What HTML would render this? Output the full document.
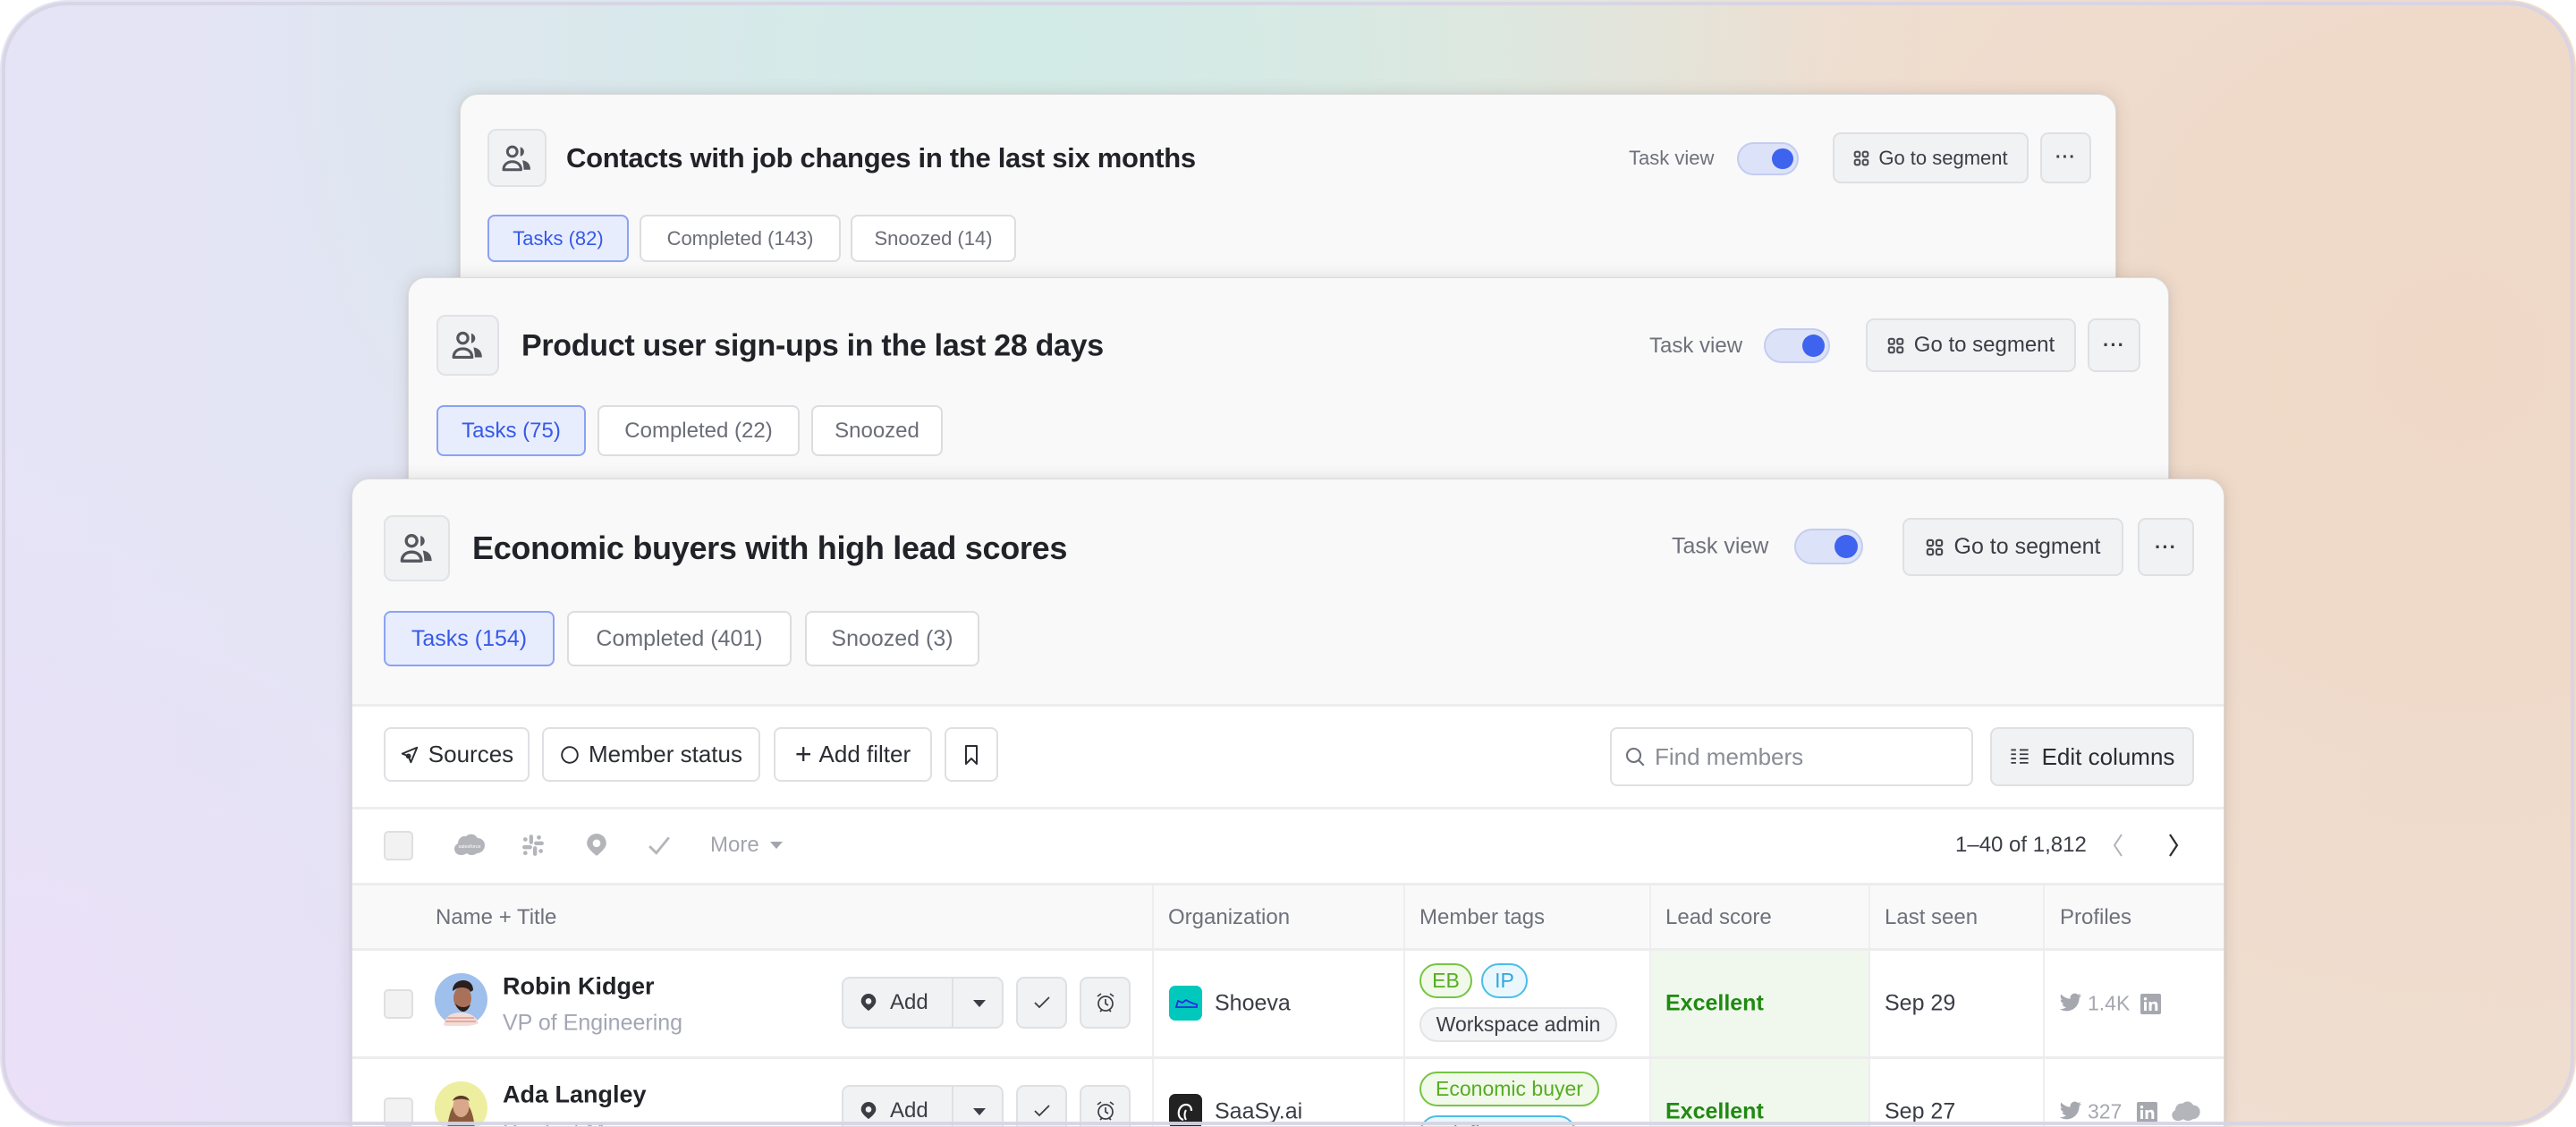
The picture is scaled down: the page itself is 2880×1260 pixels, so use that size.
<!DOCTYPE html>
<html><head><meta charset="utf-8">
<style>
*{box-sizing:border-box;margin:0;padding:0}
html,body{width:2880px;height:1260px;background:#fff;overflow:hidden;font-family:"Liberation Sans",Arial,sans-serif;color:#2b2d33}
.frame{position:absolute;left:0;top:0;width:2880px;height:1260px;border-radius:76px;overflow:hidden;
background:
radial-gradient(ellipse 900px 700px at 1150px 60px,#d2ebe6 0%,rgba(210,235,230,0) 100%),
radial-gradient(ellipse 1100px 1100px at 2750px 400px,#efd8c6 0%,rgba(239,216,198,0) 100%),
radial-gradient(ellipse 900px 800px at 0px 1260px,#ebe0f8 0%,rgba(235,224,248,0) 100%),
linear-gradient(90deg,#e5e4f6 0%,#dfe6f0 30%,#e3e6dc 55%,#efe0d4 75%,#efdfd3 100%)}
.frameb{position:absolute;left:2px;top:2px;width:2876px;height:1256px;border-radius:74px;border:4px solid rgba(215,212,228,.95);pointer-events:none}
.card{position:absolute;background:#f9f9f9;border:1.5px solid #dcdcdc;border-radius:20px;box-shadow:0 0 18px rgba(90,70,60,.16),0 2px 6px rgba(0,0,0,.06);overflow:hidden}
.a{position:absolute}
.ib{position:absolute;background:#f1f2f4;border:2px solid #e1e2e5;border-radius:10px;display:flex;align-items:center;justify-content:center}
.title{position:absolute;font-weight:700;color:#222328;white-space:nowrap;transform:translateY(-50%);letter-spacing:-.3px}
.tab{position:absolute;border:2px solid #dcdde0;border-radius:8px;background:#fff;color:#6b6e78;display:flex;align-items:center;justify-content:center;white-space:nowrap}
.tab.on{background:#e8edfd;border-color:#8aa2f5;color:#3659e8}
.tv{position:absolute;color:#6e717b;transform:translateY(-50%);white-space:nowrap}
.tog{position:absolute;background:#dce2f8;border:2px solid #c4cdf0;border-radius:30px}
.tog i{position:absolute;right:6%;top:14%;height:72%;aspect-ratio:1;border-radius:50%;background:#3e63ee}
.btn{position:absolute;background:#f1f2f4;border:2px solid #dfe0e3;border-radius:9px;display:flex;align-items:center;justify-content:center;color:#3b3d45;white-space:nowrap}
.wb{position:absolute;background:#fff;border:2px solid #dfe0e3;border-radius:8px;display:flex;align-items:center;justify-content:center;color:#2b2d33;white-space:nowrap;font-size:26px}
.hl{position:absolute;left:0;right:0;height:3px;background:#ededee}
.cb{position:absolute;width:33px;height:33px;background:#f2f2f3;border:2px solid #dedfe1;border-radius:5px}
.th{position:absolute;color:#6e717b;font-size:24px;transform:translateY(-50%);white-space:nowrap}
.vl{position:absolute;width:2px;background:#eeeeef}
.txt{position:absolute;transform:translateY(-50%);white-space:nowrap}
.pill{position:absolute;border-radius:22px;display:flex;align-items:center;justify-content:center;font-size:23px;white-space:nowrap}
.g{border:2.5px solid #76c443;background:#f1f9ea;color:#55ad22}
.b{border:2.5px solid #4bbde8;background:#eaf7fd;color:#2fa8dd}
.n{border:2px solid #e3e4e7;background:#f4f5f7;color:#3b3d45}
.dots{font-weight:700;letter-spacing:1px}
</style></head><body>
<div class="frame">
<!-- Card 1 -->
<div class="card" style="left:514px;top:105px;width:1852px;height:260px">
 <div class="ib" style="left:30px;top:38px;width:66px;height:65px">
  <svg width="36" height="34" viewBox="0 0 24 22"><circle cx="8.5" cy="6" r="3.6" fill="none" stroke="#55575e" stroke-width="2"/><path d="M2 19.5c0-4 3-6 6.5-6s6.5 2 6.5 6z" fill="none" stroke="#55575e" stroke-width="2" stroke-linejoin="round"/><path d="M14.5 2.6a3.6 3.6 0 0 1 0 7z" fill="#55575e"/><path d="M16 12.5c3.5.4 6 2.6 6 7h-5c0-3-.5-5-1-7z" fill="#55575e"/></svg>
 </div>
 <div class="title" style="left:118px;top:71px;font-size:31px">Contacts with job changes in the last six months</div>
 <div class="tab on" style="left:30px;top:134px;width:158px;height:53px;font-size:22px">Tasks (82)</div>
 <div class="tab" style="left:200px;top:134px;width:225px;height:53px;font-size:22px">Completed (143)</div>
 <div class="tab" style="left:436px;top:134px;width:185px;height:53px;font-size:22px">Snoozed (14)</div>
 <div class="tv" style="left:1306px;top:71px;font-size:22px">Task view</div>
 <div class="tog" style="left:1427px;top:53px;width:69px;height:37px"><i></i></div>
 <div class="btn" style="left:1534px;top:42px;width:219px;height:57px;font-size:22px"><svg width="18" height="18" viewBox="0 0 16 16" style="margin-right:10px"><g fill="none" stroke="#4a4c53" stroke-width="1.8"><rect x="1.5" y="1.5" width="5" height="5" rx="1.5"/><rect x="9.5" y="1.5" width="5" height="5" rx="1.5"/><rect x="1.5" y="9.5" width="5" height="5" rx="1.5"/><rect x="9.5" y="9.5" width="5" height="5" rx="1.5"/></g></svg>Go to segment</div>
 <div class="btn dots" style="left:1766px;top:42px;width:57px;height:57px;font-size:20px">···</div>
</div>
<!-- Card 2 -->
<div class="card" style="left:456px;top:310px;width:1969px;height:260px">
 <div class="ib" style="left:31px;top:41px;width:70px;height:68px">
  <svg width="38" height="36" viewBox="0 0 24 22"><circle cx="8.5" cy="6" r="3.6" fill="none" stroke="#55575e" stroke-width="2"/><path d="M2 19.5c0-4 3-6 6.5-6s6.5 2 6.5 6z" fill="none" stroke="#55575e" stroke-width="2" stroke-linejoin="round"/><path d="M14.5 2.6a3.6 3.6 0 0 1 0 7z" fill="#55575e"/><path d="M16 12.5c3.5.4 6 2.6 6 7h-5c0-3-.5-5-1-7z" fill="#55575e"/></svg>
 </div>
 <div class="title" style="left:126px;top:76px;font-size:34px">Product user sign-ups in the last 28 days</div>
 <div class="tab on" style="left:31px;top:142px;width:167px;height:57px;font-size:24px">Tasks (75)</div>
 <div class="tab" style="left:211px;top:142px;width:226px;height:57px;font-size:24px">Completed (22)</div>
 <div class="tab" style="left:450px;top:142px;width:147px;height:57px;font-size:24px">Snoozed</div>
 <div class="tv" style="left:1387px;top:76px;font-size:24px">Task view</div>
 <div class="tog" style="left:1515px;top:56px;width:74px;height:39px"><i></i></div>
 <div class="btn" style="left:1629px;top:45px;width:235px;height:60px;font-size:24px"><svg width="19" height="19" viewBox="0 0 16 16" style="margin-right:11px"><g fill="none" stroke="#4a4c53" stroke-width="1.8"><rect x="1.5" y="1.5" width="5" height="5" rx="1.5"/><rect x="9.5" y="1.5" width="5" height="5" rx="1.5"/><rect x="1.5" y="9.5" width="5" height="5" rx="1.5"/><rect x="9.5" y="9.5" width="5" height="5" rx="1.5"/></g></svg>Go to segment</div>
 <div class="btn dots" style="left:1877px;top:45px;width:59px;height:60px;font-size:22px">···</div>
</div>
<!-- Card 3 -->
<div class="card" style="left:393px;top:535px;width:2094px;height:725px;border-bottom-left-radius:0;border-bottom-right-radius:0">
 <div class="a" style="left:0;top:252px;right:0;bottom:0;background:#fff"></div>
 <div class="ib" style="left:35px;top:40px;width:74px;height:74px">
  <svg width="40" height="38" viewBox="0 0 24 22"><circle cx="8.5" cy="6" r="3.6" fill="none" stroke="#55575e" stroke-width="2"/><path d="M2 19.5c0-4 3-6 6.5-6s6.5 2 6.5 6z" fill="none" stroke="#55575e" stroke-width="2" stroke-linejoin="round"/><path d="M14.5 2.6a3.6 3.6 0 0 1 0 7z" fill="#55575e"/><path d="M16 12.5c3.5.4 6 2.6 6 7h-5c0-3-.5-5-1-7z" fill="#55575e"/></svg>
 </div>
 <div class="title" style="left:134px;top:77px;font-size:36px">Economic buyers with high lead scores</div>
 <div class="tab on" style="left:35px;top:147px;width:191px;height:62px;font-size:25px">Tasks (154)</div>
 <div class="tab" style="left:240px;top:147px;width:251px;height:62px;font-size:25px">Completed (401)</div>
 <div class="tab" style="left:506px;top:147px;width:195px;height:62px;font-size:25px">Snoozed (3)</div>
 <div class="tv" style="left:1475px;top:75px;font-size:25px">Task view</div>
 <div class="tog" style="left:1612px;top:55px;width:77px;height:40px"><i></i></div>
 <div class="btn" style="left:1733px;top:43px;width:247px;height:65px;font-size:25px"><svg width="20" height="20" viewBox="0 0 16 16" style="margin-right:12px"><g fill="none" stroke="#4a4c53" stroke-width="1.8"><rect x="1.5" y="1.5" width="5" height="5" rx="1.5"/><rect x="9.5" y="1.5" width="5" height="5" rx="1.5"/><rect x="1.5" y="9.5" width="5" height="5" rx="1.5"/><rect x="9.5" y="9.5" width="5" height="5" rx="1.5"/></g></svg>Go to segment</div>
 <div class="btn dots" style="left:1996px;top:43px;width:63px;height:65px;font-size:22px">···</div>
 <div class="hl" style="top:251px"></div>
 <!-- toolbar -->
 <div class="wb" style="left:35px;top:277px;width:163px;height:61px"><svg width="22" height="22" viewBox="0 0 16 16" style="margin-right:10px"><g fill="none" stroke="#2b2d33" stroke-width="1.4" stroke-linejoin="round"><path d="M14 2L2 7l5 2 2 5z"/><circle cx="7" cy="9" r="1.4"/></g></svg>Sources</div>
 <div class="wb" style="left:212px;top:277px;width:244px;height:61px"><svg width="22" height="22" viewBox="0 0 16 16" style="margin-right:10px"><circle cx="8" cy="8" r="6.4" fill="none" stroke="#2b2d33" stroke-width="1.4"/></svg>Member status</div>
 <div class="wb" style="left:471px;top:277px;width:177px;height:61px"><span style="font-size:32px;margin-right:8px;font-weight:300">+</span>Add filter</div>
 <div class="wb" style="left:662px;top:277px;width:60px;height:61px"><svg width="16" height="24" viewBox="0 0 12 18"><path d="M1.5 1.5h9v15L6 12l-4.5 4.5z" fill="none" stroke="#2b2d33" stroke-width="1.5" stroke-linejoin="round"/></svg></div>
 <div class="wb" style="left:1406px;top:277px;width:406px;height:66px;justify-content:flex-start;padding-left:14px;color:#8a8d96"><svg width="24" height="24" viewBox="0 0 16 16" style="margin-right:10px"><g fill="none" stroke="#6e717b" stroke-width="1.4"><circle cx="7" cy="7" r="5"/><path d="M10.6 10.6L14.5 14.5"/></g></svg>Find members</div>
 <div class="btn" style="left:1831px;top:277px;width:228px;height:66px;font-size:26px;color:#2b2d33"><svg width="22" height="20" viewBox="0 0 16 14" style="margin-right:14px"><g stroke="#3b3d45" stroke-width="1.3"><path d="M1 1.5h4M1 5h4M1 8.5h4M1 12h4M8 1.5h7M8 5h7M8 8.5h7M8 12h7"/></g></svg>Edit columns</div>
 <div class="hl" style="top:366px"></div>
 <!-- action row -->
 <div class="cb" style="left:35px;top:393px"></div>
 <svg class="a" style="left:113px;top:396px" width="36" height="26" viewBox="0 0 36 26"><path d="M9 24c-5 0-8-3-8-7 0-3 2-5 4-6 0-5 4-9 9-8 2-2 5-3 8-2 3 1 4 3 5 4 4 0 8 3 8 8s-4 9-9 9c-1 1-3 2-6 2-2 0-4-1-5-2-2 1-4 2-6 2z" fill="#b4b5ba"/><text x="18" y="16" font-size="5.5" fill="#fff" text-anchor="middle" font-family="Liberation Sans">salesforce</text></svg>
 <svg class="a" style="left:189px;top:396px" width="26" height="26" viewBox="0 0 24 24"><g fill="#b4b5ba"><rect x="8" y="1" width="4" height="10" rx="2"/><rect x="13" y="8" width="10" height="4" rx="2"/><rect x="12" y="13" width="4" height="10" rx="2"/><rect x="1" y="12" width="10" height="4" rx="2"/><circle cx="18" cy="4" r="2.2"/><circle cx="4" cy="20" r="2.2"/><circle cx="20" cy="18" r="2.2"/><circle cx="4" cy="6" r="2.2"/></g></svg>
 <svg class="a" style="left:260px;top:396px" width="26" height="26" viewBox="0 0 24 24"><path d="M12 23C6 18 2 14 2 10a10 10 0 0 1 20 0c0 4-4 8-10 13z" fill="#b4b5ba"/><circle cx="12" cy="10" r="4" fill="#fff"/></svg>
 <svg class="a" style="left:330px;top:397px" width="26" height="24" viewBox="0 0 24 22"><path d="M2 12l7 7L22 3" fill="none" stroke="#b4b5ba" stroke-width="2.6"/></svg>
 <div class="txt" style="left:400px;top:409px;font-size:24px;color:#a3a5ad">More</div>
 <svg class="a" style="left:466px;top:404px" width="16" height="10" viewBox="0 0 16 10"><path d="M1 1h14L8 9z" fill="#a3a5ad"/></svg>
 <div class="txt" style="left:1792px;top:409px;font-size:24px;color:#3b3d45">1–40 of 1,812</div>
 <svg class="a" style="left:1966px;top:394px" width="16" height="30" viewBox="0 0 16 30"><path d="M12 3L4 15l8 12" fill="none" stroke="#b0b2b8" stroke-width="2"/></svg>
 <svg class="a" style="left:2028px;top:394px" width="16" height="30" viewBox="0 0 16 30"><path d="M4 3l8 12-8 12" fill="none" stroke="#2b2d33" stroke-width="2.2"/></svg>
 <div class="hl" style="top:451px"></div>
 <!-- table -->
 <div class="a" style="left:0;right:0;top:454px;height:71px;background:#f9f9f9"></div>
 <div class="a" style="left:1450px;width:245px;top:527px;height:400px;background:#f0f8ee"></div>
 <div class="vl" style="left:894px;top:454px;height:400px"></div>
 <div class="vl" style="left:1175px;top:454px;height:400px"></div>
 <div class="vl" style="left:1450px;top:454px;height:400px"></div>
 <div class="vl" style="left:1695px;top:454px;height:400px"></div>
 <div class="vl" style="left:1890px;top:454px;height:400px"></div>
 <div class="th" style="left:93px;top:490px">Name + Title</div>
 <div class="th" style="left:912px;top:490px">Organization</div>
 <div class="th" style="left:1193px;top:490px">Member tags</div>
 <div class="th" style="left:1468px;top:490px">Lead score</div>
 <div class="th" style="left:1713px;top:490px">Last seen</div>
 <div class="th" style="left:1909px;top:490px">Profiles</div>
 <div class="hl" style="top:524px"></div>
 <div class="hl" style="top:645px"></div>
 <!-- row 1 -->
 <div class="cb" style="left:35px;top:570px"></div>
 <svg class="a" style="left:92px;top:552px" width="59" height="59" viewBox="0 0 59 59"><circle cx="29.5" cy="29.5" r="29.5" fill="#9fc0ec"/><path d="M10 58c2-10 8-14 19-14s18 5 20 12c-6 3-12 3-19 3S14 60 10 58z" fill="#f2ddd6"/><path d="M14 50h30M12 54h34" stroke="#e7a9a0" stroke-width="2"/><ellipse cx="31" cy="28" rx="10" ry="13" fill="#a9715a"/><path d="M20 20c0-9 7-12 12-12s11 3 11 11l-3 2c-2-4-6-5-10-5s-7 2-10 4z" fill="#2a1f1b"/><path d="M23 34c2 6 6 9 9 9s6-3 8-8c-3 2-5 3-8 3s-6-1-9-4z" fill="#2a1f1b"/></svg>
 <div class="txt" style="left:168px;top:567px;font-size:27px;font-weight:700;color:#222328">Robin Kidger</div>
 <div class="txt" style="left:168px;top:608px;font-size:25px;color:#a3a6b4">VP of Engineering</div>
 <div class="btn" style="left:547px;top:556px;width:181px;height:58px;font-size:24px;justify-content:flex-start;padding-left:18px"><svg width="20" height="22" viewBox="0 0 24 24" style="margin-right:14px"><path d="M12 23C6 18 2 14 2 10a10 10 0 0 1 20 0c0 4-4 8-10 13z" fill="#3b3d45"/><circle cx="12" cy="10" r="4" fill="#f1f2f4"/></svg>Add<span class="a" style="left:121px;top:0;bottom:0;width:2px;background:#dfe0e3"></span><svg class="a" style="left:144px;top:23px" width="16" height="10" viewBox="0 0 16 10"><path d="M1 1h14L8 9z" fill="#3b3d45"/></svg></div>
 <div class="btn" style="left:742px;top:556px;width:57px;height:58px"><svg width="20" height="16" viewBox="0 0 20 16"><path d="M2 8l5 5L18 2" fill="none" stroke="#3b3d45" stroke-width="1.8"/></svg></div>
 <div class="btn" style="left:813px;top:556px;width:57px;height:58px"><svg width="22" height="24" viewBox="0 0 22 24"><g fill="none" stroke="#3b3d45" stroke-width="1.7"><circle cx="11" cy="13" r="8"/><path d="M11 8v5l3 2M2 5l4-3M20 5l-4-3M5 22l2-2M17 22l-2-2"/></g></svg></div>
 <div class="a" style="left:913px;top:566px;width:37px;height:39px;border-radius:7px;background:#00c8bc"><svg width="37" height="39" viewBox="0 0 37 39"><path d="M8 24l2-7 5 2 4-3c3 2 8 4 12 5v3z" fill="none" stroke="#2b2be0" stroke-width="1.8"/></svg></div>
 <div class="txt" style="left:964px;top:586px;font-size:25px;color:#3b3d45">Shoeva</div>
 <div class="pill g" style="left:1193px;top:541px;width:59px;height:39px">EB</div>
 <div class="pill b" style="left:1262px;top:541px;width:52px;height:39px">IP</div>
 <div class="pill n" style="left:1193px;top:590px;width:221px;height:39px">Workspace admin</div>
 <div class="txt" style="left:1468px;top:586px;font-size:25px;font-weight:700;color:#1f8a10">Excellent</div>
 <div class="txt" style="left:1713px;top:586px;font-size:25px;color:#3b3d45">Sep 29</div>
 <svg class="a" style="left:1908px;top:574px" width="26" height="22" viewBox="0 0 24 20"><path d="M23 2.5c-.8.4-1.7.6-2.6.7.9-.6 1.6-1.4 2-2.5-.9.5-1.9.9-2.9 1.1A4.6 4.6 0 0 0 11.7 6C7.9 5.8 4.5 4 2.2 1.2 1 3.3 1.6 6 3.6 7.3c-.7 0-1.4-.2-2-.6 0 2.200 1.6 4.1 3.7 4.6-.7.2-1.4.2-2.1.1.6 1.9 2.3 3.2 4.3 3.2A9.3 9.3 0 0 1 .7 16.5 13 13 0 0 0 7.8 18.6c8.5 0 13.3-7.2 13.1-13.7.9-.6 1.7-1.4 2.1-2.4z" fill="#a6a8b0"/></svg>
 <div class="txt" style="left:1940px;top:586px;font-size:23px;color:#a6a8b0">1.4K</div>
 <svg class="a" style="left:1999px;top:575px" width="23" height="23" viewBox="0 0 23 23"><rect width="23" height="23" rx="2" fill="#a6a8b0"/><path d="M4 9h3v10H4zM5.5 4a1.7 1.7 0 1 1 0 3.4 1.7 1.7 0 0 1 0-3.4zM9.5 9h3v1.5c.5-1 1.7-1.8 3.3-1.8 3 0 3.5 2 3.5 4.5V19h-3v-5c0-1.3 0-2.8-1.7-2.8s-2 1.3-2 2.7V19h-3z" fill="#fff"/></svg>
 <!-- row 2 -->
 <div class="cb" style="left:35px;top:691px"></div>
 <svg class="a" style="left:92px;top:673px" width="59" height="59" viewBox="0 0 59 59"><circle cx="29.5" cy="29.5" r="29.5" fill="#eeeea0"/><path d="M14 58c0-12 3-26 8-32 3-4 12-4 15 0 5 6 8 20 8 32z" fill="#8a5a3c"/><ellipse cx="29.5" cy="28" rx="9" ry="12" fill="#d9a88a"/><path d="M20 22c2-8 17-8 19 0-4-3-15-3-19 0z" fill="#5a3a28"/></svg>
 <div class="txt" style="left:168px;top:688px;font-size:27px;font-weight:700;color:#222328">Ada Langley</div>
 <div class="txt" style="left:168px;top:729px;font-size:25px;color:#a3a6b4">Product Manager</div>
 <div class="btn" style="left:547px;top:677px;width:181px;height:58px;font-size:24px;justify-content:flex-start;padding-left:18px"><svg width="20" height="22" viewBox="0 0 24 24" style="margin-right:14px"><path d="M12 23C6 18 2 14 2 10a10 10 0 0 1 20 0c0 4-4 8-10 13z" fill="#3b3d45"/><circle cx="12" cy="10" r="4" fill="#f1f2f4"/></svg>Add<span class="a" style="left:121px;top:0;bottom:0;width:2px;background:#dfe0e3"></span><svg class="a" style="left:144px;top:23px" width="16" height="10" viewBox="0 0 16 10"><path d="M1 1h14L8 9z" fill="#3b3d45"/></svg></div>
 <div class="btn" style="left:742px;top:677px;width:57px;height:58px"><svg width="20" height="16" viewBox="0 0 20 16"><path d="M2 8l5 5L18 2" fill="none" stroke="#3b3d45" stroke-width="1.8"/></svg></div>
 <div class="btn" style="left:813px;top:677px;width:57px;height:58px"><svg width="22" height="24" viewBox="0 0 22 24"><g fill="none" stroke="#3b3d45" stroke-width="1.7"><circle cx="11" cy="13" r="8"/><path d="M11 8v5l3 2M2 5l4-3M20 5l-4-3M5 22l2-2M17 22l-2-2"/></g></svg></div>
 <div class="a" style="left:913px;top:687px;width:37px;height:39px;border-radius:7px;background:#222"><svg width="37" height="39" viewBox="0 0 37 39"><path d="M16 29c-4-1-6-5-5-10 1-4 4-7 8-7s6 3 6 7" fill="none" stroke="#fff" stroke-width="2.2"/><path d="M19 29c-2-3-2-8 0-11" fill="none" stroke="#fff" stroke-width="2"/></svg></div>
 <div class="txt" style="left:964px;top:707px;font-size:25px;color:#3b3d45">SaaSy.ai</div>
 <div class="pill g" style="left:1193px;top:662px;width:201px;height:39px">Economic buyer</div>
 <div class="pill b" style="left:1193px;top:711px;width:175px;height:39px">Influencer</div>
 <div class="txt" style="left:1468px;top:707px;font-size:25px;font-weight:700;color:#1f8a10">Excellent</div>
 <div class="txt" style="left:1713px;top:707px;font-size:25px;color:#3b3d45">Sep 27</div>
 <svg class="a" style="left:1908px;top:695px" width="26" height="22" viewBox="0 0 24 20"><path d="M23 2.5c-.8.4-1.7.6-2.6.7.9-.6 1.6-1.4 2-2.5-.9.5-1.900.9-2.9 1.1A4.6 4.6 0 0 0 11.7 6C7.9 5.8 4.5 4 2.2 1.2 1 3.3 1.6 6 3.6 7.3c-.7 0-1.4-.2-2-.6 0 2.2 1.6 4.1 3.7 4.6-.7.2-1.4.2-2.1.1.6 1.9 2.3 3.2 4.3 3.2A9.3 9.3 0 0 1 .7 16.5 13 13 0 0 0 7.8 18.6c8.5 0 13.3-7.2 13.1-13.7.9-.6 1.7-1.4 2.1-2.4z" fill="#a6a8b0"/></svg>
 <div class="txt" style="left:1940px;top:707px;font-size:23px;color:#a6a8b0">327</div>
 <svg class="a" style="left:1995px;top:696px" width="23" height="23" viewBox="0 0 23 23"><rect width="23" height="23" rx="2" fill="#a6a8b0"/><path d="M4 9h3v10H4zM5.5 4a1.7 1.7 0 1 1 0 3.4 1.7 1.7 0 0 1 0-3.4zM9.5 9h3v1.5c.5-1 1.7-1.8 3.3-1.8 3 0 3.5 2 3.5 4.5V19h-3v-5c0-1.3 0-2.8-1.7-2.8s-2 1.3-2 2.7V19h-3z" fill="#fff"/></svg>
 <svg class="a" style="left:2033px;top:695px" width="34" height="24" viewBox="0 0 36 26"><path d="M9 24c-5 0-8-3-8-7 0-3 2-5 4-6 0-5 4-9 9-8 2-2 5-3 8-2 3 1 4 3 5 4 4 0 8 3 8 8s-4 9-9 9c-1 1-3 2-6 2-2 0-4-1-5-2-2 1-4 2-6 2z" fill="#b4b5ba"/></svg>
</div>
<div class="frameb"></div>
</div>
</body></html>
